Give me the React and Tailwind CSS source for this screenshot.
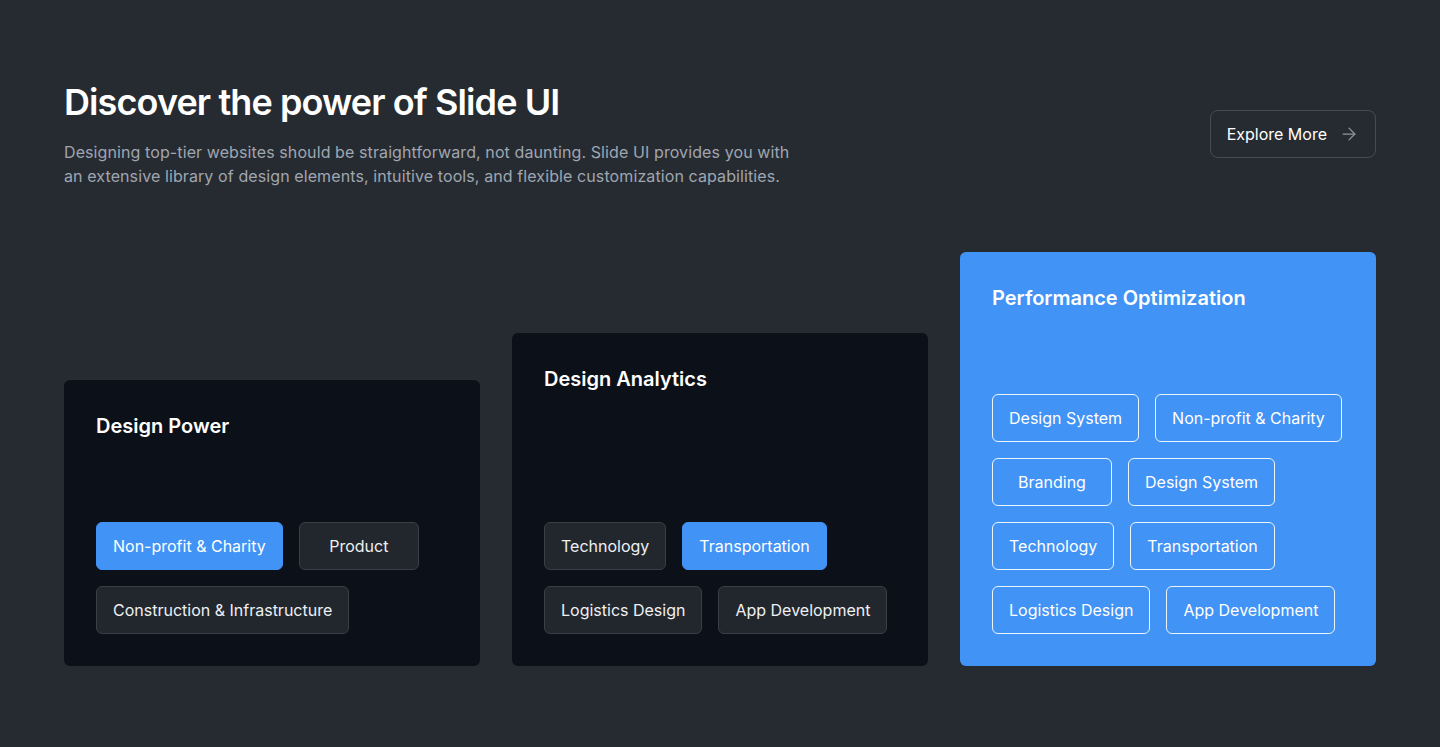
import React from 'react'
import { ArrowRight } from 'lucide-react'

const cards = [
  {
    title: 'Design Power',
    height: 'h-[286px]',
    variant: 'dark',
    rows: [
      [{ label: 'Non-profit & Charity', active: true }, { label: 'Product' }],
      [{ label: 'Construction & Infrastructure' }],
    ],
  },
  {
    title: 'Design Analytics',
    height: 'h-[333px]',
    variant: 'dark',
    rows: [
      [{ label: 'Technology' }, { label: 'Transportation', active: true }],
      [{ label: 'Logistics Design' }, { label: 'App Development' }],
    ],
  },
  {
    title: 'Performance Optimization',
    height: 'h-[414px]',
    variant: 'blue',
    rows: [
      [{ label: 'Design System' }, { label: 'Non-profit & Charity' }],
      [{ label: 'Branding' }, { label: 'Design System' }],
      [{ label: 'Technology' }, { label: 'Transportation' }],
      [{ label: 'Logistics Design' }, { label: 'App Development' }],
    ],
  },
]

function Tag({ label, active, variant }) {
  let cls = 'border-[#3a3f47] bg-[#22272e] text-[#eef0f3]'
  if (active) cls = 'border-[#4193f5] bg-[#4193f5] text-white'
  if (variant === 'blue') cls = 'border-white/90 bg-transparent text-white'
  return (
    <span
      className={`flex h-12 min-w-[120px] shrink-0 items-center justify-center whitespace-nowrap rounded-md border px-4 text-base ${cls}`}
    >
      {label}
    </span>
  )
}

export default function App() {
  return (
    <div
      className="min-h-[747px] bg-[#262b32] px-16 pt-20 pb-20"
      style={{ fontFamily: 'Inter, "Noto Sans", sans-serif' }}
    >
      <div className="flex items-center justify-between">
        <div>
          <h1 className="text-4xl font-semibold tracking-tight text-white leading-11">
            Discover the power of Slide UI
          </h1>
          <p className="mt-4 max-w-[730px] text-base leading-6 tracking-[0.1px] text-[#a0a6b0]">
            Designing top-tier websites should be straightforward, not daunting. Slide UI provides you with
            an extensive library of design elements, intuitive tools, and flexible customization capabilities.
          </p>
        </div>
        <button className="flex h-12 items-center gap-3 rounded-lg border border-[#464c55] px-4 text-base text-white">
          Explore More
          <ArrowRight size={20} strokeWidth={1.5} className="text-[#8f96a1]" />
        </button>
      </div>

      <div className="mt-16 grid grid-cols-3 items-end gap-8">
        {cards.map((card) => (
          <div
            key={card.title}
            className={`flex flex-col justify-between rounded-md p-8 ${card.height} ${
              card.variant === 'blue' ? 'bg-[#4193f5]' : 'bg-[#0c1119]'
            }`}
          >
            <h2 className="text-xl font-semibold text-white">{card.title}</h2>
            <div className="flex flex-col gap-4">
              {card.rows.map((row, r) => (
                <div key={r} className="flex gap-4">
                  {row.map((t, i) => (
                    <Tag key={i} {...t} variant={card.variant} />
                  ))}
                </div>
              ))}
            </div>
          </div>
        ))}
      </div>
    </div>
  )
}
